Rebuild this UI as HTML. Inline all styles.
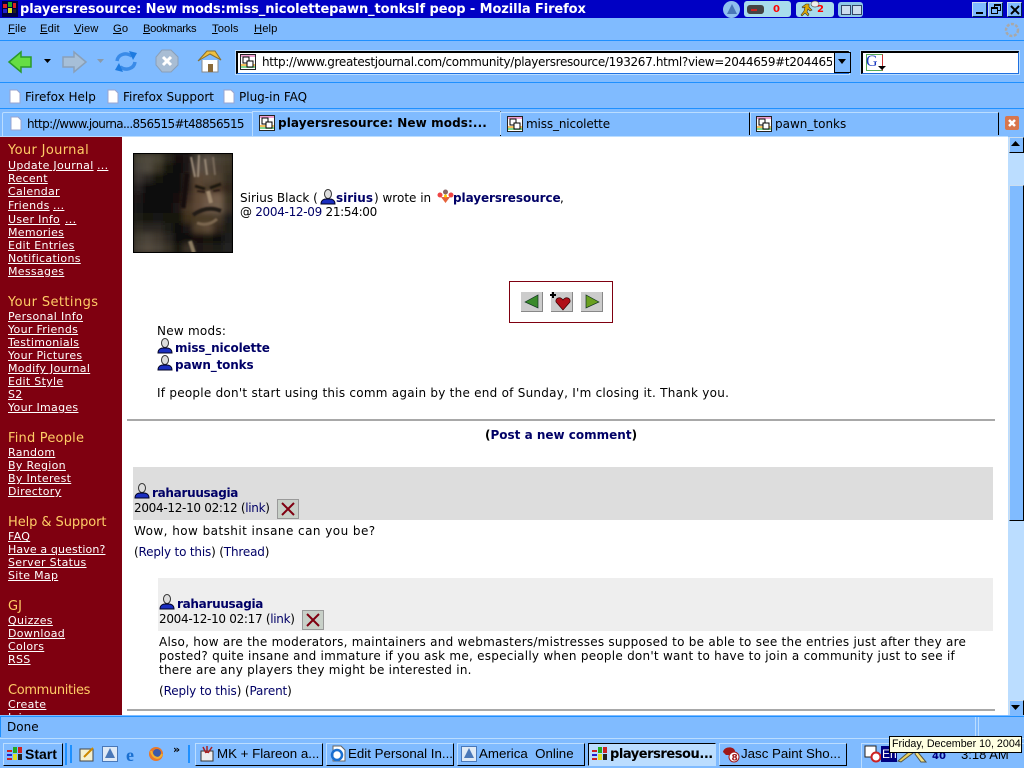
<!DOCTYPE html>
<html><head><meta charset="utf-8"><title>playersresource</title>
<style>
html,body{margin:0;padding:0;width:1024px;height:768px;overflow:hidden;background:#fff}
.t{position:absolute;white-space:nowrap;line-height:14px}
.b{position:absolute}
.ui{font:12px "DejaVu Sans",sans-serif;color:#000}
.ls{font:11.2px "Liberation Sans",sans-serif;color:#000;letter-spacing:.1px}
.c{font:12px "DejaVu Sans",sans-serif;color:#000;letter-spacing:.25px}
.d{font:12px "DejaVu Sans",sans-serif;color:#000;letter-spacing:-.3px}
.a{color:#000066}
.s{color:#fff;font:11px "DejaVu Sans",sans-serif;text-decoration:underline;letter-spacing:.3px}
.h{font:13px "DejaVu Sans",sans-serif;color:#FFCC66}
.tb{font:13.3px "Liberation Sans",sans-serif;color:#000}
svg{position:absolute;overflow:visible}
u{text-decoration:underline}
</style></head><body>
<!-- chrome bg -->
<div class="b" style="left:0;top:0;width:1024px;height:137px;background:#80BBFF"></div>
<div class="b" style="left:0;top:0;width:1024px;height:18px;background:#0000C4"></div>
<div class="b" style="left:0;top:40px;width:1024px;height:1px;background:#1E90FF"></div>
<div class="b" style="left:0;top:82px;width:1024px;height:1px;background:#1E90FF"></div>
<div class="b" style="left:0;top:108px;width:1024px;height:1px;background:#1E90FF"></div>
<!-- title -->
<svg style="left:2px;top:1px" width="16" height="16"><rect width="16" height="16" fill="#000040"/><rect x="1" y="3" width="4" height="4" fill="#d22"/><rect x="1" y="8" width="4" height="4" fill="#22c"/><rect x="6" y="1" width="4" height="5" fill="#2a2"/><rect x="6" y="7" width="4" height="5" fill="#dd2"/><rect x="11" y="2" width="3" height="5" fill="#d22"/><rect x="11" y="8" width="3" height="4" fill="#222"/></svg>
<div class="t" style="left:20px;top:3px;font:bold 13px/14px 'DejaVu Sans',sans-serif;color:#fff;letter-spacing:-.1px">playersresource: New mods:miss_nicolettepawn_tonksIf peop - Mozilla Firefox</div>
<!-- tray in title -->
<div class="b" style="left:723px;top:1px;width:17px;height:17px;border-radius:9px;background:#8fc0ee"></div>
<svg style="left:726px;top:4px" width="12" height="12"><path d="M6 0L11 10H1Z" fill="#4a78b8"/></svg>
<div class="b" style="left:744px;top:1px;width:47px;height:16px;background:#a8dcec;border-radius:3px"></div>
<div class="b" style="left:747px;top:5px;width:17px;height:9px;background:#444;border-radius:3px"></div>
<div class="b" style="left:751px;top:9px;width:6px;height:2px;background:#c22"></div>
<div class="t" style="left:773px;top:3px;font:bold 10px/14px 'DejaVu Sans',sans-serif;color:#f00">0</div>
<div class="b" style="left:796px;top:2px;width:38px;height:15px;background:#a8dcec;border-radius:3px"></div>
<svg style="left:798px;top:1px" width="26" height="17"><path d="M8 3h3v3l3 3-2 1-2-2-1 3 2 2-1 2-3-3-3 3-1-1 3-4 1-4-2 1-1-1z" fill="#e0a800" stroke="#333" stroke-width=".6"/><ellipse cx="17" cy="3" rx="4" ry="3" fill="#eee" stroke="#555" stroke-width=".7"/></svg>
<div class="t" style="left:817px;top:3px;font:bold 10px/14px 'DejaVu Sans',sans-serif;color:#f00">2</div>
<div class="b" style="left:838px;top:2px;width:25px;height:15px;background:#8fc8e8;border-radius:3px"></div>
<div class="b" style="left:841px;top:5px;width:8px;height:8px;border:1px solid #346;background:#cde"></div>
<div class="b" style="left:852px;top:5px;width:8px;height:8px;border:1px solid #346;background:#cde"></div>
<!-- window buttons -->
<div class="b" style="left:972px;top:2px;width:13px;height:13px;background:#80BBFF;border:1px solid #cde;border-right-color:#024;border-bottom-color:#024"></div>
<div class="b" style="left:976px;top:12px;width:7px;height:2px;background:#000"></div>
<div class="b" style="left:988px;top:2px;width:13px;height:13px;background:#80BBFF;border:1px solid #cde;border-right-color:#024;border-bottom-color:#024"></div>
<div class="b" style="left:994px;top:4px;width:5px;height:4px;border:1px solid #000;border-top-width:2px"></div>
<div class="b" style="left:991px;top:7px;width:5px;height:4px;border:1px solid #000;border-top-width:2px;background:#80BBFF"></div>
<div class="b" style="left:1007px;top:2px;width:13px;height:13px;background:#80BBFF;border:1px solid #cde;border-right-color:#024;border-bottom-color:#024"></div>
<svg style="left:1010px;top:5px" width="10" height="10"><path d="M1 1L9 9M9 1L1 9" stroke="#000" stroke-width="2"/></svg>
<!-- menu -->
<div class="t ls" style="left:8px;top:23px"><u>F</u>ile</div>
<div class="t ls" style="left:40px;top:23px"><u>E</u>dit</div>
<div class="t ls" style="left:74px;top:23px"><u>V</u>iew</div>
<div class="t ls" style="left:113px;top:23px"><u>G</u>o</div>
<div class="t ls" style="left:143px;top:23px;letter-spacing:-.3px"><u>B</u>ookmarks</div>
<div class="t ls" style="left:212px;top:23px"><u>T</u>ools</div>
<div class="t ls" style="left:254px;top:23px"><u>H</u>elp</div>
<svg style="left:1003px;top:21px" width="18" height="18"><circle cx="9" cy="9" r="6" fill="none" stroke="#a8a8a8" stroke-width="2.5" stroke-dasharray="3 1.5"/></svg>
<!-- nav icons -->
<svg style="left:8px;top:50px" width="26" height="24"><path d="M1 12L13 2V7H23V17H13V22Z" fill="#66DD44" stroke="#2a9a2a" stroke-width="1.5"/></svg>
<svg style="left:44px;top:58px" width="8" height="6"><path d="M0 1H7L3.5 5Z" fill="#000"/></svg>
<svg style="left:61px;top:50px" width="26" height="24"><path d="M25 12L13 2V7H2V17H13V22Z" fill="#A6BFD8" stroke="#8aa0b8" stroke-width="1.5"/></svg>
<svg style="left:97px;top:58px" width="8" height="6"><path d="M0 1H7L3.5 5Z" fill="#8a9aaa"/></svg>
<svg style="left:113px;top:49px" width="26" height="26" fill="none"><path d="M4 12C5 5 13 3 19 7" stroke="#3A8BE8" stroke-width="3.5"/><path d="M22 13C21 20 13 22 7 18" stroke="#3A8BE8" stroke-width="3.5"/><path d="M16 2L24 4L20 11Z" fill="#1E7BE0"/><path d="M10 23L2 21L6 14Z" fill="#1E7BE0"/></svg>
<svg style="left:155px;top:49px" width="24" height="24"><path d="M7 1H16L23 8V16L16 23H7L1 16V8Z" fill="#A8BDD4" stroke="#8a9fb8"/><path d="M8 8L16 16M16 8L8 16" stroke="#fff" stroke-width="3"/></svg>
<svg style="left:197px;top:48px" width="26" height="26"><path d="M5 12V24H21V12" fill="#fff" stroke="#888"/><path d="M1 13L10 3H18L24 12L13 6Z" fill="#EFC040" stroke="#887030"/><rect x="11" y="16" width="5" height="8" fill="#8a6a3a"/></svg>
<!-- url bar -->
<div class="b" style="left:236px;top:51px;width:610px;height:20px;background:#fff;border:1px solid #1E70E0;border-left:2px solid #000;border-top:2px solid #000;box-shadow:0 0 0 1px #BBDDFF"></div>
<svg style="left:240px;top:54px" width="16" height="16"><rect x=".5" y=".5" width="15" height="15" fill="#fff" stroke="#222"/><rect x="1" y="10" width="14" height="2" fill="#f7c060"/><rect x="1" y="12" width="14" height="2" fill="#80d890"/><rect x="1" y="1" width="14" height="2" fill="#f0a0d0"/><rect x="3" y="3" width="6" height="6" fill="#fff" stroke="#000"/><rect x="7" y="7" width="6" height="6" fill="#fff" stroke="#000"/></svg>
<div class="t ui" style="left:262px;top:55px;width:570px;overflow:hidden;letter-spacing:-.33px">http://www.greatestjournal.com/community/playersresource/193267.html?view=2044659#t2044659</div>
<div class="b" style="left:834px;top:52px;width:15px;height:19px;background:#80BBFF;border:1px solid #000"></div>
<svg style="left:838px;top:59px" width="9" height="6"><path d="M0 0H8L4 5Z" fill="#000"/></svg>
<!-- search -->
<div class="b" style="left:861px;top:51px;width:155px;height:20px;background:#fff;border:1px solid #1E70E0;border-left:2px solid #000;border-top:2px solid #000;box-shadow:0 0 0 1px #BBDDFF"></div>
<div class="b" style="left:866px;top:54px;width:15px;height:15px;border:1px solid #5a5;border-right-color:#c33"></div>
<div class="t" style="left:866px;top:54px;font:16px/16px 'Liberation Serif',serif;color:#1a3ac0">G</div>
<svg style="left:878px;top:66px" width="9" height="5"><path d="M0 0H8L4 4Z" fill="#000"/></svg>
<!-- bookmarks -->
<svg style="left:9px;top:89px" width="12" height="15"><path d="M1 1H8L11 4V14H1Z" fill="#fff" stroke="#99a4d0"/></svg>
<div class="t ui" style="left:25px;top:90px">Firefox Help</div>
<svg style="left:107px;top:89px" width="12" height="15"><path d="M1 1H8L11 4V14H1Z" fill="#fff" stroke="#99a4d0"/></svg>
<div class="t ui" style="left:123px;top:90px">Firefox Support</div>
<svg style="left:223px;top:89px" width="12" height="15"><path d="M1 1H8L11 4V14H1Z" fill="#fff" stroke="#99a4d0"/></svg>
<div class="t ui" style="left:239px;top:90px">Plug-in FAQ</div>
<!-- tabs -->
<div class="b" style="left:2px;top:112px;width:249px;height:23px;border:1px solid #BBDDFF;border-radius:2px 2px 0 0"></div>
<svg style="left:10px;top:116px" width="12" height="15"><path d="M1 1H8L11 4V14H1Z" fill="#fff" stroke="#99a4d0"/></svg>
<div class="t ui" style="left:27px;top:117px;letter-spacing:-.64px">http://www.journa...856515#t48856515</div>
<div class="b" style="left:252px;top:111px;width:247px;height:25px;background:#80BBFF;border-left:1px solid #BBDDFF;border-top:1px solid #BBDDFF;border-right:1px solid #000"></div>
<svg style="left:259px;top:115px" width="16" height="16"><rect x=".5" y=".5" width="15" height="15" fill="#fff" stroke="#222"/><rect x="1" y="10" width="14" height="2" fill="#f7c060"/><rect x="1" y="12" width="14" height="2" fill="#80d890"/><rect x="1" y="1" width="14" height="2" fill="#f0a0d0"/><rect x="3" y="3" width="6" height="6" fill="#fff" stroke="#000"/><rect x="7" y="7" width="6" height="6" fill="#fff" stroke="#000"/></svg>
<div class="t ui" style="left:278px;top:116px;font-weight:bold;letter-spacing:.1px">playersresource: New mods:...</div>
<div class="b" style="left:500px;top:112px;width:248px;height:22px;border-top:1px solid #BBDDFF;border-left:1px solid #BBDDFF;border-right:1px solid #000"></div>
<svg style="left:507px;top:116px" width="16" height="16"><rect x=".5" y=".5" width="15" height="15" fill="#fff" stroke="#222"/><rect x="1" y="10" width="14" height="2" fill="#f7c060"/><rect x="1" y="12" width="14" height="2" fill="#80d890"/><rect x="1" y="1" width="14" height="2" fill="#f0a0d0"/><rect x="3" y="3" width="6" height="6" fill="#fff" stroke="#000"/><rect x="7" y="7" width="6" height="6" fill="#fff" stroke="#000"/></svg>
<div class="t ui" style="left:526px;top:117px;letter-spacing:-.14px">miss_nicolette</div>
<div class="b" style="left:750px;top:112px;width:247px;height:22px;border-top:1px solid #BBDDFF;border-left:1px solid #BBDDFF;border-right:1px solid #000"></div>
<svg style="left:756px;top:116px" width="16" height="16"><rect x=".5" y=".5" width="15" height="15" fill="#fff" stroke="#222"/><rect x="1" y="10" width="14" height="2" fill="#f7c060"/><rect x="1" y="12" width="14" height="2" fill="#80d890"/><rect x="1" y="1" width="14" height="2" fill="#f0a0d0"/><rect x="3" y="3" width="6" height="6" fill="#fff" stroke="#000"/><rect x="7" y="7" width="6" height="6" fill="#fff" stroke="#000"/></svg>
<div class="t ui" style="left:775px;top:117px">pawn_tonks</div>
<svg style="left:1005px;top:116px" width="14" height="14"><rect width="14" height="14" rx="2" fill="#D8764C"/><path d="M4 4L10 10M10 4L4 10" stroke="#fff" stroke-width="2.5"/></svg>
<div class="b" style="left:0;top:136px;width:1008px;height:1px;background:#BBDDFF"></div>

<!-- sidebar -->
<div class="b" style="left:0;top:137px;width:122px;height:578px;background:#7F0010;overflow:hidden">
<div style="position:absolute;left:0;top:-136px;width:122px;height:800px">
<div class="t h" style="left:8px;top:142px;letter-spacing:.35px">Your Journal</div>
<div class="t s" style="left:8px;top:158px">Update Journal</div><div class="t s" style="left:97px;top:158px">...</div>
<div class="t s" style="left:8px;top:171px">Recent</div>
<div class="t s" style="left:8px;top:184px">Calendar</div>
<div class="t s" style="left:8px;top:198px">Friends</div><div class="t s" style="left:53px;top:198px">...</div>
<div class="t s" style="left:8px;top:212px">User Info</div><div class="t s" style="left:65px;top:212px">...</div>
<div class="t s" style="left:8px;top:225px">Memories</div>
<div class="t s" style="left:8px;top:238px">Edit Entries</div>
<div class="t s" style="left:8px;top:251px">Notifications</div>
<div class="t s" style="left:8px;top:264px">Messages</div>
<div class="t h" style="left:8px;top:294px;letter-spacing:.4px">Your Settings</div>
<div class="t s" style="left:8px;top:309px">Personal Info</div>
<div class="t s" style="left:8px;top:322px">Your Friends</div>
<div class="t s" style="left:8px;top:335px">Testimonials</div>
<div class="t s" style="left:8px;top:348px">Your Pictures</div>
<div class="t s" style="left:8px;top:361px">Modify Journal</div>
<div class="t s" style="left:8px;top:374px">Edit Style</div>
<div class="t s" style="left:8px;top:387px">S2</div>
<div class="t s" style="left:8px;top:400px">Your Images</div>
<div class="t h" style="left:8px;top:430px;letter-spacing:.2px">Find People</div>
<div class="t s" style="left:8px;top:445px">Random</div>
<div class="t s" style="left:8px;top:458px">By Region</div>
<div class="t s" style="left:8px;top:471px">By Interest</div>
<div class="t s" style="left:8px;top:484px">Directory</div>
<div class="t h" style="left:8px;top:514px;letter-spacing:-.07px">Help &amp; Support</div>
<div class="t s" style="left:8px;top:529px">FAQ</div>
<div class="t s" style="left:8px;top:542px;letter-spacing:.13px">Have a question?</div>
<div class="t s" style="left:8px;top:555px">Server Status</div>
<div class="t s" style="left:8px;top:568px">Site Map</div>
<div class="t h" style="left:8px;top:598px">GJ</div>
<div class="t s" style="left:8px;top:613px">Quizzes</div>
<div class="t s" style="left:8px;top:626px">Download</div>
<div class="t s" style="left:8px;top:639px">Colors</div>
<div class="t s" style="left:8px;top:652px">RSS</div>
<div class="t h" style="left:8px;top:682px;letter-spacing:-.35px">Communities</div>
<div class="t s" style="left:8px;top:697px">Create</div>
<div class="t s" style="left:8px;top:710px">Join</div>
</div></div>

<!-- userpic -->
<svg style="left:133px;top:153px" width="100" height="100" viewBox="0 0 100 100">
<defs><filter id="bl" x="-10%" y="-10%" width="120%" height="120%"><feGaussianBlur stdDeviation="3"/></filter><filter id="bs"><feGaussianBlur stdDeviation=".8"/></filter><clipPath id="cp"><rect width="100" height="100"/></clipPath></defs>
<g clip-path="url(#cp)"><rect width="100" height="100" fill="#1a1712"/>
<g filter="url(#bl)" shape-rendering="crispEdges">
<rect x="0" y="0" width="11" height="11" fill="#4a4538"/><rect x="10" y="0" width="11" height="11" fill="#4f4a3c"/><rect x="20" y="0" width="11" height="11" fill="#4a4436"/><rect x="30" y="0" width="11" height="11" fill="#2a251e"/><rect x="40" y="0" width="11" height="11" fill="#14110e"/><rect x="50" y="0" width="11" height="11" fill="#1a1612"/><rect x="60" y="0" width="11" height="11" fill="#4a4238"/><rect x="70" y="0" width="11" height="11" fill="#5a5045"/><rect x="80" y="0" width="11" height="11" fill="#4a4234"/><rect x="90" y="0" width="11" height="11" fill="#453c2e"/>
<rect x="0" y="10" width="11" height="11" fill="#46423a"/><rect x="10" y="10" width="11" height="11" fill="#504a3c"/><rect x="20" y="10" width="11" height="11" fill="#3a3428"/><rect x="30" y="10" width="11" height="11" fill="#141210"/><rect x="40" y="10" width="11" height="11" fill="#0f0d0b"/><rect x="50" y="10" width="11" height="11" fill="#1c1814"/><rect x="60" y="10" width="11" height="11" fill="#5a4e44"/><rect x="70" y="10" width="11" height="11" fill="#54483c"/><rect x="80" y="10" width="11" height="11" fill="#4a3e32"/><rect x="90" y="10" width="11" height="11" fill="#3d3426"/>
<rect x="0" y="20" width="11" height="11" fill="#3a3630"/><rect x="10" y="20" width="11" height="11" fill="#2a2620"/><rect x="20" y="20" width="11" height="11" fill="#141210"/><rect x="30" y="20" width="11" height="11" fill="#0e0c0a"/><rect x="40" y="20" width="11" height="11" fill="#0e0c0a"/><rect x="50" y="20" width="11" height="11" fill="#2a221a"/><rect x="60" y="20" width="11" height="11" fill="#5a4636"/><rect x="70" y="20" width="11" height="11" fill="#5a4838"/><rect x="80" y="20" width="11" height="11" fill="#504232"/><rect x="90" y="20" width="11" height="11" fill="#352d22"/>
<rect x="0" y="30" width="11" height="11" fill="#262320"/><rect x="10" y="30" width="11" height="11" fill="#100f0d"/><rect x="20" y="30" width="11" height="11" fill="#0c0b09"/><rect x="30" y="30" width="11" height="11" fill="#0e0c0a"/><rect x="40" y="30" width="11" height="11" fill="#0f0d0a"/><rect x="50" y="30" width="11" height="11" fill="#2a201a"/><rect x="60" y="30" width="11" height="11" fill="#5a4533"/><rect x="70" y="30" width="11" height="11" fill="#4a3a2c"/><rect x="80" y="30" width="11" height="11" fill="#4a3626"/><rect x="90" y="30" width="11" height="11" fill="#30281e"/>
<rect x="0" y="40" width="11" height="11" fill="#1a1815"/><rect x="10" y="40" width="11" height="11" fill="#0c0b0a"/><rect x="20" y="40" width="11" height="11" fill="#0c0b09"/><rect x="30" y="40" width="11" height="11" fill="#0f0d0b"/><rect x="40" y="40" width="11" height="11" fill="#141110"/><rect x="50" y="40" width="11" height="11" fill="#3a2c20"/><rect x="60" y="40" width="11" height="11" fill="#5e4836"/><rect x="70" y="40" width="11" height="11" fill="#6e5846"/><rect x="80" y="40" width="11" height="11" fill="#745e4c"/><rect x="90" y="40" width="11" height="11" fill="#3a3024"/>
<rect x="0" y="50" width="11" height="11" fill="#181614"/><rect x="10" y="50" width="11" height="11" fill="#0c0b0a"/><rect x="20" y="50" width="11" height="11" fill="#0e0c0a"/><rect x="30" y="50" width="11" height="11" fill="#100e0c"/><rect x="40" y="50" width="11" height="11" fill="#1a1612"/><rect x="50" y="50" width="11" height="11" fill="#4a3828"/><rect x="60" y="50" width="11" height="11" fill="#5e4a38"/><rect x="70" y="50" width="11" height="11" fill="#6e5a48"/><rect x="80" y="50" width="11" height="11" fill="#72604e"/><rect x="90" y="50" width="11" height="11" fill="#3c3226"/>
<rect x="0" y="60" width="11" height="11" fill="#1c1a16"/><rect x="10" y="60" width="11" height="11" fill="#141210"/><rect x="20" y="60" width="11" height="11" fill="#161412"/><rect x="30" y="60" width="11" height="11" fill="#14120f"/><rect x="40" y="60" width="11" height="11" fill="#141210"/><rect x="50" y="60" width="11" height="11" fill="#40301f"/><rect x="60" y="60" width="11" height="11" fill="#4a3a28"/><rect x="70" y="60" width="11" height="11" fill="#4a3a28"/><rect x="80" y="60" width="11" height="11" fill="#4a3a2a"/><rect x="90" y="60" width="11" height="11" fill="#1e1c1a"/>
<rect x="0" y="70" width="11" height="11" fill="#2e2a24"/><rect x="10" y="70" width="11" height="11" fill="#2a2620"/><rect x="20" y="70" width="11" height="11" fill="#2a2620"/><rect x="30" y="70" width="11" height="11" fill="#1c1a16"/><rect x="40" y="70" width="11" height="11" fill="#100e0c"/><rect x="50" y="70" width="11" height="11" fill="#1a1612"/><rect x="60" y="70" width="11" height="11" fill="#52422f"/><rect x="70" y="70" width="11" height="11" fill="#5e4c38"/><rect x="80" y="70" width="11" height="11" fill="#30281e"/><rect x="90" y="70" width="11" height="11" fill="#1c1a18"/>
<rect x="0" y="80" width="11" height="11" fill="#423c32"/><rect x="10" y="80" width="11" height="11" fill="#4a4338"/><rect x="20" y="80" width="11" height="11" fill="#40392f"/><rect x="30" y="80" width="11" height="11" fill="#2a2620"/><rect x="40" y="80" width="11" height="11" fill="#100e0c"/><rect x="50" y="80" width="11" height="11" fill="#0c0b0a"/><rect x="60" y="80" width="11" height="11" fill="#121010"/><rect x="70" y="80" width="11" height="11" fill="#141210"/><rect x="80" y="80" width="11" height="11" fill="#100e0c"/><rect x="90" y="80" width="11" height="11" fill="#1e1c1a"/>
<rect x="0" y="90" width="11" height="11" fill="#4a4339"/><rect x="10" y="90" width="11" height="11" fill="#524a3e"/><rect x="20" y="90" width="11" height="11" fill="#4a4338"/><rect x="30" y="90" width="11" height="11" fill="#383228"/><rect x="40" y="90" width="11" height="11" fill="#151310"/><rect x="50" y="90" width="11" height="11" fill="#3a3228"/><rect x="60" y="90" width="11" height="11" fill="#1a1612"/><rect x="70" y="90" width="11" height="11" fill="#201c18"/><rect x="80" y="90" width="11" height="11" fill="#1c1a16"/><rect x="90" y="90" width="11" height="11" fill="#222020"/>
</g>
<g filter="url(#bs)" fill="none">
<path d="M58 4L62 24M66 2L65 24M72 6L74 22" stroke="#9a8a78" stroke-width="2"/>
<path d="M80 4L82 22" stroke="#7a6c5c" stroke-width="2"/>
<path d="M54 20L50 55" stroke="#120f0c" stroke-width="5"/>
<path d="M62 33L72 36M77 35L88 31" stroke="#1e1610" stroke-width="3"/>
<path d="M64 38L72 39M80 38L87 37" stroke="#2a1e16" stroke-width="2"/>
<path d="M75 38L78 50" stroke="#a08a70" stroke-width="4"/>
<path d="M60 62Q74 52 88 58" stroke="#241a12" stroke-width="4"/>
<path d="M64 70Q75 74 84 66" stroke="#7a6650" stroke-width="3"/>
<path d="M57 88L61 100" stroke="#8a7a60" stroke-width="4"/>
</g></g>
<rect x=".5" y=".5" width="99" height="99" fill="none" stroke="#000"/>
</svg>

<!-- header text -->
<div class="t c" style="left:240px;top:191px;letter-spacing:0">Sirius Black (</div>
<svg style="left:320px;top:189px" width="16" height="16"><ellipse cx="8" cy="5" rx="3.5" ry="4.5" fill="#ddd" stroke="#333"/><path d="M1 15C1 11 4 10 6 10H10C12 10 15 11 15 15Z" fill="#1a2ec0" stroke="#002"/></svg>
<div class="t c a" style="left:336px;top:191px;font-weight:bold;letter-spacing:0">sirius</div>
<div class="t c" style="left:374px;top:191px;letter-spacing:0">) wrote in</div>
<svg style="left:437px;top:188px" width="17" height="17"><circle cx="8.500" cy="4" r="2.500" fill="#866"/><circle cx="3" cy="7" r="2.500" fill="#e44"/><circle cx="14" cy="7" r="2.500" fill="#e44"/><path d="M4 9H13L8.500 15Z" fill="#e6633a"/><circle cx="8.500" cy="8" r="1.500" fill="#fc0"/></svg>
<div class="t c a" style="left:453px;top:191px;font-weight:bold;letter-spacing:-.07px">playersresource</div>
<div class="t c" style="left:560px;top:191px">,</div>
<div class="t d" style="left:240px;top:205px">@ <span class="a">2004-12-09</span> 21:54:00</div>

<!-- nav box -->
<div class="b" style="left:509px;top:281px;width:102px;height:40px;border:1px solid #7F0010"></div>
<div class="b" style="left:521px;top:292px;width:21px;height:19px;background:#ccc;border-right:1px solid #888;border-bottom:1px solid #888"></div>
<svg style="left:524px;top:294px" width="16" height="16"><path d="M1 8L14 1V14Z" fill="#3a8a2a" stroke="#132" stroke-width=".7"/></svg>
<div class="b" style="left:551px;top:292px;width:21px;height:19px;background:#ccc;border-right:1px solid #888;border-bottom:1px solid #888"></div>
<svg style="left:550px;top:291px" width="24" height="20"><path d="M3 1V7M0 4H6" stroke="#000" stroke-width="2"/><path d="M13 19L6 11C5 7 10 5 13 9C16 5 21 7 20 11Z" fill="#b01018" stroke="#300" stroke-width=".7"/></svg>
<div class="b" style="left:581px;top:292px;width:21px;height:19px;background:#ccc;border-right:1px solid #888;border-bottom:1px solid #888"></div>
<svg style="left:584px;top:294px" width="16" height="16"><path d="M15 8L2 1V14Z" fill="#6aa020" stroke="#132" stroke-width=".7"/></svg>

<!-- entry -->
<div class="t c" style="left:157px;top:324px">New mods:</div>
<svg style="left:157px;top:338px" width="17" height="17"><ellipse cx="8" cy="5" rx="3.5" ry="4.500" fill="#ddd" stroke="#333"/><path d="M1 15C1 11 4 10 6 10H10C12 10 15 11 15 15Z" fill="#1a2ec0" stroke="#002"/></svg>
<div class="t c a" style="left:175px;top:341px;font-weight:bold;letter-spacing:-.15px">miss_nicolette</div>
<svg style="left:157px;top:355px" width="17" height="17"><ellipse cx="8" cy="5" rx="3.5" ry="4.500" fill="#ddd" stroke="#333"/><path d="M1 15C1 11 4 10 6 10H10C12 10 15 11 15 15Z" fill="#1a2ec0" stroke="#002"/></svg>
<div class="t c a" style="left:175px;top:358px;font-weight:bold;letter-spacing:-.15px">pawn_tonks</div>
<div class="t c" style="left:157px;top:386px">If people don't start using this comm again by the end of Sunday, I'm closing it. Thank you.</div>
<div class="b" style="left:127px;top:419px;width:868px;height:2px;background:#a8a8a8"></div>
<div class="t c" style="left:485px;top:428px;font-weight:bold;letter-spacing:0">(<span class="a">Post a new comment</span>)</div>

<!-- comment 1 -->
<div class="b" style="left:133px;top:467px;width:860px;height:53px;background:#dddddd"></div>
<svg style="left:134px;top:483px" width="17" height="17"><ellipse cx="8" cy="5" rx="3.5" ry="4.500" fill="#ddd" stroke="#333"/><path d="M1 15C1 11 4 10 6 10H10C12 10 15 11 15 15Z" fill="#1a2ec0" stroke="#002"/></svg>
<div class="t c a" style="left:152px;top:486px;font-weight:bold;letter-spacing:-.3px">raharuusagia</div>
<div class="t d" style="left:134px;top:501px">2004-12-10 02:12 (<span class="a">link</span>)</div>
<div class="b" style="left:277px;top:499px;width:20px;height:18px;background:#c8d0c8;border:1px solid #999"></div>
<svg style="left:281px;top:502px" width="14" height="14"><path d="M1 1L13 13M13 1L1 13" stroke="#7F0010" stroke-width="2"/></svg>
<div class="t c" style="left:134px;top:524px;letter-spacing:.45px">Wow, how batshit insane can you be?</div>
<div class="t c" style="left:134px;top:545px;letter-spacing:-.17px">(<span class="a">Reply to this</span>) (<span class="a">Thread</span>)</div>

<!-- comment 2 -->
<div class="b" style="left:158px;top:578px;width:835px;height:53px;background:#eeeeee"></div>
<svg style="left:159px;top:594px" width="17" height="17"><ellipse cx="8" cy="5" rx="3.5" ry="4.500" fill="#ddd" stroke="#333"/><path d="M1 15C1 11 4 10 6 10H10C12 10 15 11 15 15Z" fill="#1a2ec0" stroke="#002"/></svg>
<div class="t c a" style="left:177px;top:597px;font-weight:bold;letter-spacing:-.3px">raharuusagia</div>
<div class="t d" style="left:159px;top:612px">2004-12-10 02:17 (<span class="a">link</span>)</div>
<div class="b" style="left:302px;top:610px;width:20px;height:18px;background:#c8d0c8;border:1px solid #999"></div>
<svg style="left:306px;top:613px" width="14" height="14"><path d="M1 1L13 13M13 1L1 13" stroke="#7F0010" stroke-width="2"/></svg>
<div class="t c" style="left:159px;top:635px">Also, how are the moderators, maintainers and webmasters/mistresses supposed to be able to see the entries just after they are</div>
<div class="t c" style="left:159px;top:649px">posted? quite insane and immature if you ask me, especially when people don't want to have to join a community just to see if</div>
<div class="t c" style="left:159px;top:663px">there are any players they might be interested in.</div>
<div class="t c" style="left:159px;top:684px;letter-spacing:-.13px">(<span class="a">Reply to this</span>) (<span class="a">Parent</span>)</div>
<div class="b" style="left:127px;top:709px;width:868px;height:2px;background:#a8a8a8"></div>

<!-- scrollbar -->
<div class="b" style="left:1008px;top:137px;width:16px;height:578px;background:#BBDDFF"></div>
<div class="b" style="left:1009px;top:137px;width:13px;height:14px;background:#80BBFF;border:1px solid #000;border-left-color:#cde;border-top-color:#cde"></div>
<svg style="left:1011px;top:141px" width="10" height="6"><path d="M0 5H9L4.500 0Z" fill="#000"/></svg>
<div class="b" style="left:1009px;top:185px;width:13px;height:334px;background:#80BBFF;border:1px solid #000;border-left-color:#cde;border-top-color:#cde"></div>
<div class="b" style="left:1009px;top:700px;width:13px;height:14px;background:#80BBFF;border:1px solid #000;border-left-color:#cde;border-top-color:#cde"></div>
<svg style="left:1011px;top:705px" width="10" height="6"><path d="M0 0H9L4.500 5Z" fill="#000"/></svg>

<!-- status -->
<div class="b" style="left:0;top:715px;width:1024px;height:53px;background:#80BBFF"></div>
<div class="b" style="left:0;top:716px;width:1024px;height:1px;background:#1E90FF"></div>
<div class="b" style="left:0;top:717px;width:1px;height:20px;background:#1E90FF"></div>
<div class="t ui" style="left:7px;top:720px">Done</div>
<div class="b" style="left:975px;top:717px;width:1px;height:20px;background:#BBDDFF"></div>
<div class="b" style="left:978px;top:717px;width:1px;height:20px;background:#BBDDFF"></div>
<div class="b" style="left:0;top:738px;width:1024px;height:1px;background:#BBDDFF"></div>
<!-- taskbar -->
<div class="b" style="left:3px;top:743px;width:58px;height:21px;background:#80BBFF;border:1px solid #000;border-left-color:#BBDDFF;border-top-color:#BBDDFF"></div>
<svg style="left:6px;top:746px" width="18" height="16"><rect x="1" y="4" width="5" height="2" fill="#c22"/><rect x="1" y="8" width="5" height="2" fill="#22c"/><rect x="1" y="12" width="5" height="2" fill="#c22"/><rect x="7" y="1" width="4" height="6" fill="#2a2"/><rect x="7" y="8" width="4" height="6" fill="#dd2"/><rect x="12" y="1" width="4" height="6" fill="#c22"/><rect x="12" y="8" width="4" height="6" fill="#222"/></svg>
<div class="t" style="left:25px;top:747px;font:bold 14px/14px 'Liberation Sans',sans-serif;color:#000">Start</div>
<div class="b" style="left:65px;top:743px;width:2px;height:22px;background:#1E90FF"></div>
<div class="b" style="left:70px;top:745px;width:2px;height:18px;background:#1E90FF"></div>
<svg style="left:79px;top:746px" width="16" height="16"><rect x="1" y="3" width="13" height="12" fill="#f4f0d0" stroke="#444"/><path d="M5 11L14 2" stroke="#c80" stroke-width="2"/></svg>
<div class="b" style="left:102px;top:746px;width:14px;height:14px;background:#dfeaf6;border:1px solid #4a78b8"></div>
<svg style="left:104px;top:748px" width="12" height="12"><path d="M6 0L11 10H1Z" fill="#4a78b8"/></svg>
<svg style="left:125px;top:746px" width="16" height="17"><text x="1" y="15" font-family="Liberation Serif,serif" font-size="18" font-weight="bold" fill="#1a6fd0">e</text></svg>
<svg style="left:148px;top:746px" width="16" height="16"><circle cx="8" cy="8" r="7" fill="#E8782A"/><circle cx="9" cy="7" r="4" fill="#3a5aa8"/><path d="M3 5C5 13 12 14 14 8" stroke="#f0b030" fill="none" stroke-width="2"/></svg>
<div class="t" style="left:173px;top:743px;font:bold 11px/14px 'DejaVu Sans',sans-serif">»</div>
<div class="b" style="left:188px;top:745px;width:2px;height:18px;background:#1E90FF"></div>
<div class="b" style="left:195px;top:743px;width:126px;height:21px;background:#80BBFF;border:1px solid #000;border-left-color:#BBDDFF;border-top-color:#BBDDFF"></div>
<svg style="left:199px;top:745px" width="17" height="17"><rect x="2" y="6" width="12" height="10" fill="#eee" stroke="#333"/><path d="M4 2L7 8M8 1V8M13 2L9 8" stroke="#a22" stroke-width="1.500"/></svg>
<div class="t tb" style="left:217px;top:746px">MK + Flareon a...</div>
<div class="b" style="left:326px;top:743px;width:126px;height:21px;background:#80BBFF;border:1px solid #000;border-left-color:#BBDDFF;border-top-color:#BBDDFF"></div>
<svg style="left:330px;top:745px" width="17" height="17"><path d="M3 1H11L15 5V16H3Z" fill="#fff" stroke="#666"/><circle cx="7" cy="10" r="5" fill="none" stroke="#1a6fd0" stroke-width="2.500"/></svg>
<div class="t tb" style="left:348px;top:746px">Edit Personal In...</div>
<div class="b" style="left:457px;top:743px;width:126px;height:21px;background:#80BBFF;border:1px solid #000;border-left-color:#BBDDFF;border-top-color:#BBDDFF"></div>
<div class="b" style="left:461px;top:746px;width:14px;height:14px;background:#dfeaf6;border:1px solid #4a78b8"></div>
<svg style="left:463px;top:748px" width="12" height="12"><path d="M6 0L11 10H1Z" fill="#4a78b8"/></svg>
<div class="t tb" style="left:479px;top:746px">America&nbsp; Online</div>
<div class="b" style="left:588px;top:743px;width:126px;height:21px;background:#BBDDFF;border:1px solid #BBDDFF;border-left-color:#000;border-top-color:#000"></div>
<svg style="left:591px;top:745px" width="18" height="17"><rect x="1" y="5" width="5" height="2" fill="#c22"/><rect x="1" y="9" width="5" height="2" fill="#22c"/><rect x="1" y="13" width="5" height="2" fill="#c22"/><rect x="7" y="2" width="4" height="6" fill="#2a2"/><rect x="7" y="9" width="4" height="6" fill="#dd2"/><rect x="12" y="2" width="4" height="6" fill="#c22"/><rect x="12" y="9" width="4" height="6" fill="#222"/></svg>
<div class="t" style="left:610px;top:748px;font:bold 13px/14px 'DejaVu Sans',sans-serif;letter-spacing:-.45px">playersresou...</div>
<div class="b" style="left:719px;top:743px;width:126px;height:21px;background:#80BBFF;border:1px solid #000;border-left-color:#BBDDFF;border-top-color:#BBDDFF"></div>
<svg style="left:722px;top:745px" width="18" height="18"><path d="M1 7C2 1 12 1 13 6L14 10H4Z" fill="#a01818"/><circle cx="12" cy="12" r="5" fill="#fff" stroke="#a01818"/><text x="9.500" y="15.500" font-family="DejaVu Sans,sans-serif" font-size="9" font-weight="bold" fill="#a01818">8</text></svg>
<div class="t tb" style="left:741px;top:746px">Jasc Paint Sho...</div>
<!-- tray -->
<div class="b" style="left:861px;top:743px;width:163px;height:24px;border-left:1px solid #BBDDFF;border-top:1px solid #BBDDFF"></div>
<svg style="left:864px;top:745px" width="18" height="18"><rect x="1" y="1" width="11" height="11" fill="#fff" stroke="#222"/><circle cx="12" cy="12" r="4.500" fill="#fff" stroke="#c22" stroke-width="2"/></svg>
<div class="b" style="left:881px;top:746px;width:16px;height:16px;background:#000080"></div>
<div class="t" style="left:882px;top:747px;font:12px/14px 'Liberation Sans',sans-serif;color:#fff">En</div>
<svg style="left:897px;top:747px" width="34" height="16"><path d="M1 14L14 3L16 6L4 15Z" fill="#e8d060" stroke="#554"/><path d="M19 3L29 15L24 15L18 7Z" fill="#f4e080" stroke="#554"/></svg>
<div class="t" style="left:932px;top:750px;font:bold 10px/14px 'DejaVu Sans',sans-serif;color:#000080">40</div>
<div class="t" style="left:961px;top:748px;font:13px/14px 'Liberation Sans',sans-serif;color:#000">3:18 AM</div>
<!-- tooltip -->
<div class="b" style="left:889px;top:736px;width:131px;height:15px;background:#FFFFE1;border:1px solid #000"></div>
<div class="t" style="left:892px;top:737px;font:10.7px/14px 'Liberation Sans',sans-serif;color:#000">Friday, December 10, 2004</div>
</body></html>
